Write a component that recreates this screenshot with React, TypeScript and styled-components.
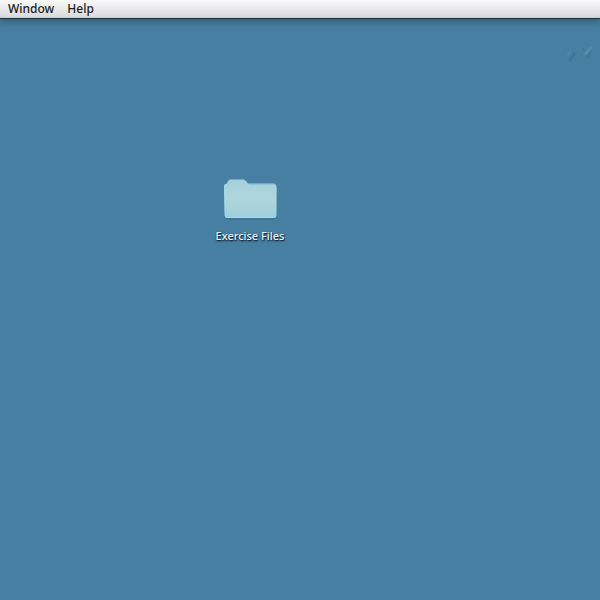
import React from "react";
import styled, { createGlobalStyle } from "styled-components";

const GlobalStyle = createGlobalStyle`
  * { box-sizing: border-box; }
  body {
    margin: 0;
    background: #467fa1;
    font-family: "Noto Sans", "Open Sans", sans-serif;
  }
`;

const Desktop = styled.div`
  display: flex;
  flex-direction: column;
  min-height: 100vh;
  background: #467fa1;
  overflow: hidden;
`;

const MenuBar = styled.nav`
  display: flex;
  align-items: center;
  gap: 13px;
  height: 19px;
  padding: 0 8px;
  background: linear-gradient(#fafafa, #dcdcdf 88%, #c6d2da);
  border-bottom: 1px solid #18313f;
  box-shadow: 0 1px 8px rgba(40, 65, 75, 0.8);
`;

const MenuButton = styled.button`
  padding: 0;
  border: 0;
  background: none;
  color: #1c1c1c;
  font: 500 12px/18px "Noto Sans", "Open Sans", sans-serif;
  cursor: default;
`;

const Workspace = styled.main`
  position: relative;
  flex: 1;
`;

const DesktopItem = styled.button`
  position: absolute;
  left: 210px;
  top: 158px;
  display: flex;
  flex-direction: column;
  align-items: center;
  gap: 7px;
  width: 80px;
  padding: 0;
  border: 0;
  background: none;
  color: #e9f3f7;
  font: 500 11px/16px "Noto Sans", "Open Sans", sans-serif;
  text-shadow: 0 1px 2px #102634, 1px 1px 1px #1d3a4c;
  white-space: nowrap;
  cursor: default;
`;

const Marks = styled.svg`
  position: absolute;
  right: 4px;
  top: 22px;
`;

function FolderIcon() {
  return (
    <svg width="56" height="44" viewBox="0 0 56 44" aria-hidden="true">
      <defs>
        <linearGradient id="folder" x1="0" y1="0" x2="0" y2="1">
          <stop offset="0" stopColor="#a3d0de" />
          <stop offset="0.5" stopColor="#b0d6db" />
          <stop offset="1" stopColor="#9dcfdd" />
        </linearGradient>
      </defs>
      <path
        d="M2 9Q2 6.5 5 6.5L6 4Q6.5 2.5 8.5 2.5H21Q23 2.5 24 4L26 6.5H51Q54.5 6.5 54.5 10L54 39Q54 41 52 41H5Q3 41 3 39Z"
        fill="url(#folder)"
      />
      <path d="M2.5 11L3 38Q3 40.5 5.5 40.5H51.5Q54 40.5 54 38V11" fill="none" stroke="#a8dcec" opacity="0.8" />
      <path d="M27 7.5H51Q53 7.5 54 9" fill="none" stroke="#8fbccb" opacity="0.7" />
      <path d="M4 42H53" stroke="#326580" opacity="0.6" />
    </svg>
  );
}

export default function App() {
  return (
    <>
      <GlobalStyle />
      <Desktop>
        <MenuBar aria-label="Menu bar">
          <MenuButton type="button">Window</MenuButton>
          <MenuButton type="button">Help</MenuButton>
        </MenuBar>
        <Workspace>
          <DesktopItem type="button">
            <FolderIcon />
            Exercise Files
          </DesktopItem>
          <Marks width="32" height="28" viewBox="0 0 32 28" fill="none" strokeLinecap="round" aria-hidden="true">
            <path d="M6 19L10 13" stroke="#34698a" strokeWidth="3" opacity="0.4" />
            <path d="M4 14L6 10" stroke="#5690b0" strokeWidth="2" opacity="0.5" />
            <path d="M21 13L27 7" stroke="#629bb8" strokeWidth="3" opacity="0.5" />
            <path d="M23 16L28 9" stroke="#386d8d" strokeWidth="2" opacity="0.4" />
            <path d="M19 7L20 9" stroke="#386d8d" strokeWidth="2" opacity="0.35" />
          </Marks>
        </Workspace>
      </Desktop>
    </>
  );
}
